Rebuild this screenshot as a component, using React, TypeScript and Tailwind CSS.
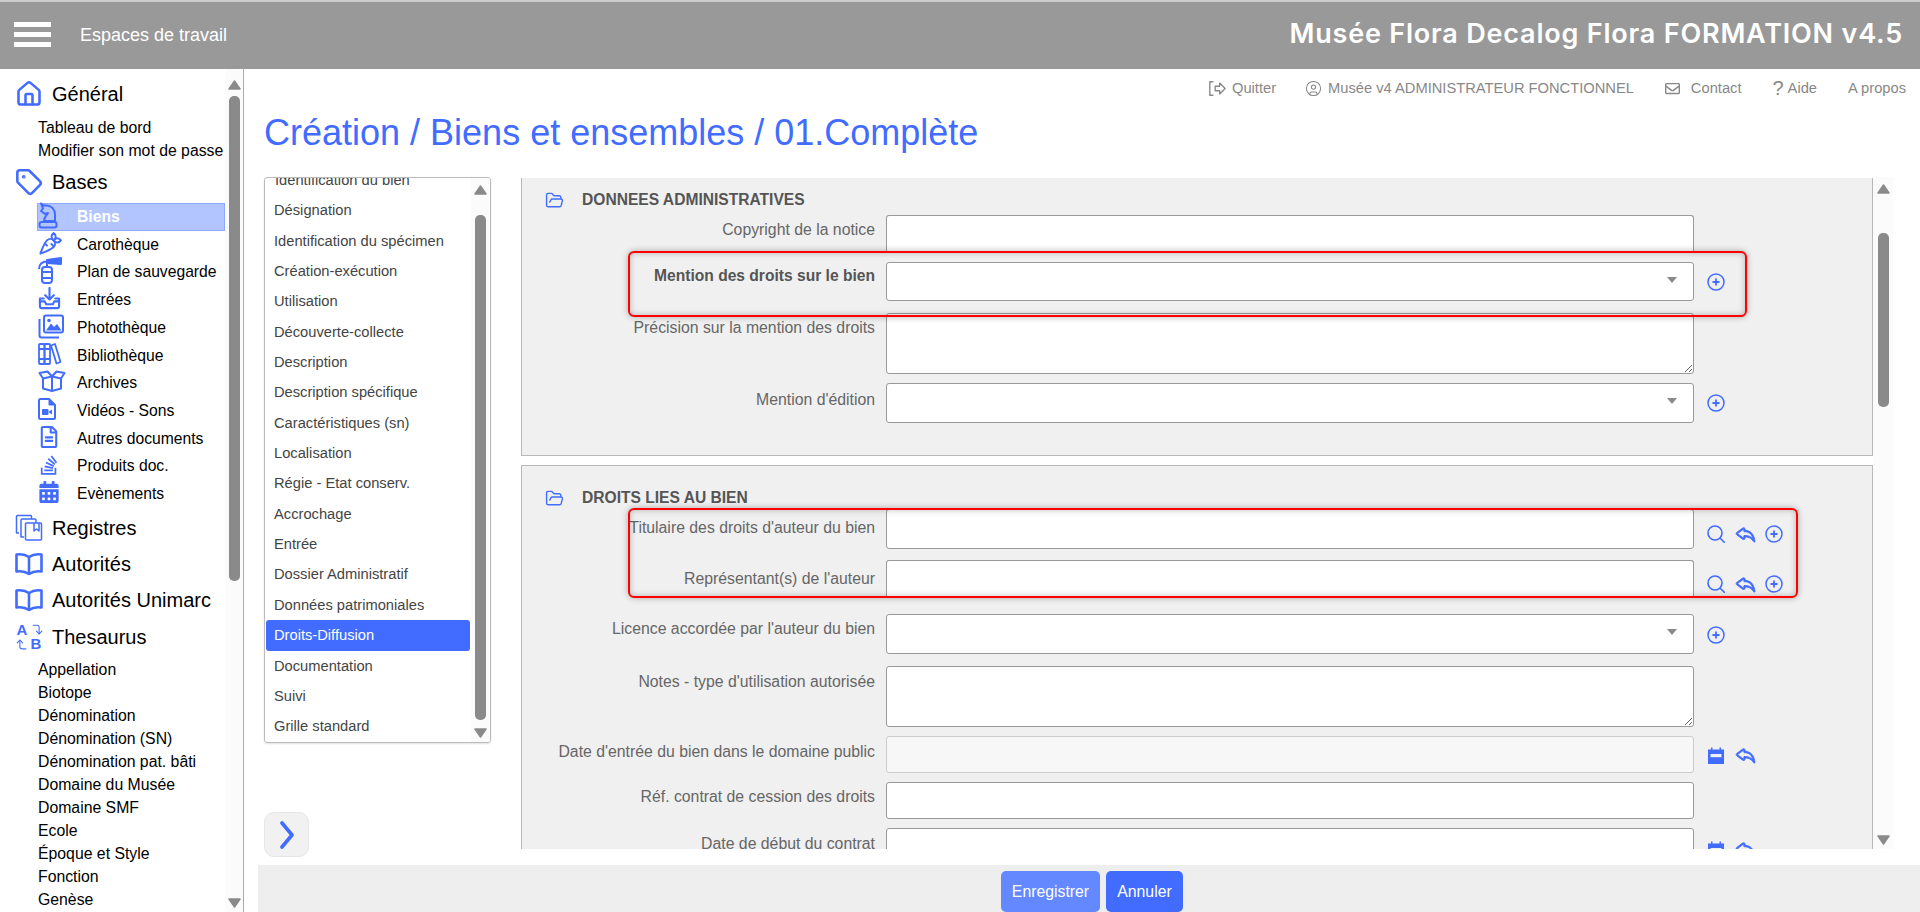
import React from 'react';
import {
  Carrot, CircleUser, CornerLeftUp, CornerRightDown, FolderOpen, House, Tag,
} from 'lucide-react';
import { BsReply } from 'react-icons/bs';
import { FaCalendarAlt, FaRegEnvelope, FaRegFileAlt, FaStackOverflow } from 'react-icons/fa';

const BLUE = '#416cff';

const ArrowUp = ({ className = '' }: { className?: string }) => (
  <svg width="13" height="10" viewBox="0 0 13 10" className={className}>
    <polygon points="6.5,1 12,9 1,9" fill="#8a8a8a" stroke="#8a8a8a" strokeWidth="1.5" strokeLinejoin="round" />
  </svg>
);

const ArrowDown = ({ className = '' }: { className?: string }) => (
  <svg width="13" height="10" viewBox="0 0 13 10" className={className}>
    <polygon points="1,1 12,1 6.5,9" fill="#8a8a8a" stroke="#8a8a8a" strokeWidth="1.5" strokeLinejoin="round" />
  </svg>
);

const Caret = () => (
  <svg width="10" height="6" viewBox="0 0 10 6">
    <polygon points="0,0 10,0 5,6" fill="#8a8a8a" />
  </svg>
);

const Knight = () => (
  <svg width="20" height="27" viewBox="0 0 20 27" fill="none" stroke={BLUE} strokeWidth="2" strokeLinejoin="round">
    <path d="M3 1.500l2.500 2h3c5 0 8.500 4 8.500 9v6.500H6c0-4 2-5 4-8l-3 1-4-3 2-2.500z" />
    <rect x="1.500" y="20" width="17" height="5.500" rx="2" />
  </svg>
);

const Extinguisher = () => (
  <svg width="24" height="27" viewBox="0 0 24 27" fill="none" stroke={BLUE} strokeWidth="2" strokeLinejoin="round">
    <rect x="4" y="10" width="10" height="16" rx="3" />
    <path d="M4 15h10M4 21h10" />
    <path d="M1 12C1 7.500 4 4.500 9 4.500" />
    <path d="M9 4.500v5.500" />
    <path d="M9 3l14-2v6L9 6z" fill={BLUE} />
  </svg>
);

const InboxIn = () => (
  <svg width="23" height="23" viewBox="0 0 24 24" fill="none" stroke={BLUE} strokeWidth="2.200" strokeLinecap="round" strokeLinejoin="round">
    <path d="M12 1v12M7.500 8.500 12 13l4.500-4.500" />
    <path d="M6 12H2v8a2 2 0 0 0 2 2h16a2 2 0 0 0 2-2v-8h-4" />
    <path d="M2 15h5l1.500 3h7l1.500-3h5" />
  </svg>
);

const Photos = () => (
  <svg width="26" height="25" viewBox="0 0 26 25" fill="none" stroke={BLUE} strokeWidth="2" strokeLinejoin="round">
    <rect x="6" y="1.500" width="19" height="17" rx="2" />
    <path d="M1.500 5v16.500a2 2 0 0 0 2 2H21" />
    <path d="M8 16.500l5-7 3 3.500 3-3 4.500 6.500z" fill={BLUE} stroke="none" />
    <circle cx="11" cy="6.500" r="1.800" fill={BLUE} stroke="none" />
  </svg>
);

const Books = () => (
  <svg width="24" height="24" viewBox="0 0 24 24" fill="none" stroke={BLUE} strokeWidth="1.800" strokeLinejoin="round">
    <rect x="1" y="2" width="5.500" height="20" rx="1" />
    <rect x="6.500" y="2" width="5.500" height="20" rx="1" />
    <path d="M13 3.500 17 2l5.500 18-4 1.500z" />
    <path d="M1 7h11M1 17h11" />
  </svg>
);

const BoxOpen = () => (
  <svg width="28" height="22" viewBox="0 0 28 22" fill="none" stroke={BLUE} strokeWidth="2" strokeLinejoin="round">
    <path d="M14 6.500 9.500 1.500 1.500 3l3.500 5.500z" />
    <path d="M14 6.500l4.500-5 8 1.500L23 8.500z" />
    <path d="M5 9v9.500l9 2.500 9-2.500V9" />
    <path d="M14 6.500V21" />
  </svg>
);

const FileVideo = () => (
  <svg width="18" height="22" viewBox="0 0 18 22" fill="none">
    <path d="M2.500 1H11l6 6v12.500a1.500 1.500 0 0 1-1.500 1.500h-13A1.500 1.500 0 0 1 1 19.500v-17A1.500 1.500 0 0 1 2.500 1z" stroke={BLUE} strokeWidth="2" />
    <path d="M11 1v6h6" fill={BLUE} stroke={BLUE} strokeWidth="1" />
    <rect x="4" y="11" width="6.500" height="6" rx="1" fill={BLUE} />
    <path d="M11 13.500 14 11.500v5l-3-2z" fill={BLUE} />
  </svg>
);

const Albums = () => (
  <svg width="28" height="27" viewBox="0 0 28 27" fill="none" stroke={BLUE} strokeWidth="1.500" strokeLinejoin="round">
    <path d="M4 19H1.500V2.500a1 1 0 0 1 1-1h13a1 1 0 0 1 1 1V5" />
    <path d="M9 23H6V6a1 1 0 0 1 1-1h13a1 1 0 0 1 1 1v3" />
    <rect x="10.500" y="9" width="16" height="17" rx="1" />
    <path d="M19 9v8l2.500-2 2.500 2V9" />
  </svg>
);

const BookWide = () => (
  <svg width="28" height="24" viewBox="0 0 28 24" fill="none" stroke={BLUE} strokeWidth="2.600" strokeLinejoin="round">
    <path d="M14 5C10.500 2.500 6 1.800 1.500 2.500v17c4.500-.7 9 0 12.500 2.500 3.500-2.500 8-3.200 12.500-2.500v-17C22 1.800 17.500 2.500 14 5z" />
    <path d="M14 5v17" />
  </svg>
);

const PlusCircle = () => (
  <svg width="18" height="18" viewBox="0 0 18 18" fill="none" stroke={BLUE} className="shrink-0">
    <circle cx="9" cy="9" r="8" strokeWidth="1.500" />
    <path d="M9 5.500v7M5.500 9h7" strokeWidth="1.800" />
  </svg>
);

const SearchIcon = () => (
  <svg width="18" height="18" viewBox="0 0 18 18" fill="none" stroke={BLUE} strokeWidth="1.600" strokeLinecap="round" className="shrink-0">
    <circle cx="8" cy="8" r="7" />
    <path d="M13.200 13.200 17.300 17.300" />
  </svg>
);

const CalendarBand = () => (
  <svg width="18" height="18" viewBox="0 0 16 18" className="shrink-0">
    <path d="M0 3.500h3V1.500h1.500v2h7v-2H13v2h3V18H0z" fill={BLUE} />
    <rect x="2.500" y="8" width="11" height="3.200" fill="#f0f0f0" />
  </svg>
);

const ExitIcon = () => (
  <svg width="18" height="17" viewBox="0 0 20 18" fill="none" stroke="#888" strokeWidth="1.500" strokeLinejoin="round">
    <path d="M6 1.500H2v15h4" />
    <path d="M8 6.500h5V3l6 6-6 6v-3.500H8z" />
  </svg>
);

const Reply = () => <BsReply size={23} color={BLUE} className="shrink-0 -mx-[1px]" strokeWidth={0.6} />;

const ThesaurusIcon = () => (
  <div className="grid grid-cols-2 w-[28px] h-[28px] text-[#416cff] font-black text-[15px] leading-[14px] text-center">
    <span>A</span>
    <CornerRightDown size={13} strokeWidth={2} className="ml-[2px]" />
    <CornerLeftUp size={13} strokeWidth={2} className="mt-[1px]" />
    <span>B</span>
  </div>
);

const subBases = [
  { label: 'Biens', icon: <Knight />, active: true },
  { label: 'Carothèque', icon: <Carrot size={25} color={BLUE} strokeWidth={1.9} /> },
  { label: 'Plan de sauvegarde', icon: <Extinguisher /> },
  { label: 'Entrées', icon: <InboxIn /> },
  { label: 'Photothèque', icon: <Photos /> },
  { label: 'Bibliothèque', icon: <Books /> },
  { label: 'Archives', icon: <BoxOpen /> },
  { label: 'Vidéos - Sons', icon: <FileVideo /> },
  { label: 'Autres documents', icon: <FaRegFileAlt size={22} color={BLUE} /> },
  { label: 'Produits doc.', icon: <FaStackOverflow size={22} color={BLUE} /> },
  { label: 'Evènements', icon: <FaCalendarAlt size={22} color={BLUE} /> },
];

const thesaurus = [
  'Appellation', 'Biotope', 'Dénomination', 'Dénomination (SN)', 'Dénomination pat. bâti', 'Domaine du Musée',
  'Domaine SMF', 'Ecole', 'Époque et Style', 'Fonction', 'Genèse',
];

const sections = [
  'Désignation', 'Identification du spécimen', 'Création-exécution', 'Utilisation', 'Découverte-collecte', 'Description',
  'Description spécifique', 'Caractéristiques (sn)', 'Localisation', 'Régie - Etat conserv.', 'Accrochage', 'Entrée',
  'Dossier Administratif', 'Données patrimoniales', 'Droits-Diffusion', 'Documentation', 'Suivi', 'Grille standard',
];

const GroupTitle = ({ icon, label, className = '' }: { icon: React.ReactNode; label: string; className?: string }) => (
  <div className={`flex items-center h-[28px] pl-[15px] text-[20px] text-black whitespace-nowrap ${className}`}>
    <div className="w-[37px] shrink-0 flex items-center">{icon}</div>
    {label}
  </div>
);

const SubLink = ({ label }: { label: string }) => (
  <div className="h-[23px] pl-[38px] leading-[23px] text-[15.8px] text-black whitespace-nowrap">{label}</div>
);

const Sidebar = () => (
  <aside className="w-[244px] shrink-0 flex border-r border-[#aaa] overflow-hidden">
    <div className="w-[225px] shrink-0 overflow-hidden pt-[11px]">
      <GroupTitle icon={<House size={28} color={BLUE} strokeWidth={2.2} />} label="Général" />
      <div className="mt-[8px]">
        <SubLink label="Tableau de bord" />
        <SubLink label="Modifier son mot de passe" />
      </div>
      <GroupTitle icon={<Tag size={28} color={BLUE} strokeWidth={2.2} />} label="Bases" className="mt-[6px]" />
      <div className="mt-[7px]">
        {subBases.map((item) => (
          <div key={item.label} className="flex items-center h-[27.7px] pl-[37px] text-[15.7px] whitespace-nowrap">
            <div
              className={
                item.active
                  ? 'flex items-center w-full h-full bg-[#b3c5ff] border border-[#8ea8ff] font-bold text-white'
                  : 'flex items-center w-full h-full border border-transparent text-black'
              }
            >
              <div className="w-[39px] shrink-0 flex items-center -mt-[3px]">{item.icon}</div>
              {item.label}
            </div>
          </div>
        ))}
      </div>
      <GroupTitle icon={<Albums />} label="Registres" className="mt-[6px]" />
      <GroupTitle icon={<BookWide />} label="Autorités" className="mt-[8px]" />
      <GroupTitle icon={<BookWide />} label="Autorités Unimarc" className="mt-[8.5px]" />
      <GroupTitle icon={<ThesaurusIcon />} label="Thesaurus" className="mt-[8.5px]" />
      <div className="mt-[7px]">
        {thesaurus.map((t) => (
          <SubLink key={t} label={t} />
        ))}
      </div>
    </div>
    <div className="flex-1 bg-[#fbfbfb] flex flex-col items-center pt-[11px]">
      <ArrowUp />
      <div className="w-[11px] h-[485px] mt-[6px] rounded-[5px] bg-[#8a8a8a]" />
      <ArrowDown className="mt-[317px]" />
    </div>
  </aside>
);

const TopLinks = () => (
  <div className="h-[38px] flex items-center justify-end pr-[14px] text-[14.7px] text-[#888] whitespace-nowrap">
    <ExitIcon />
    <span className="ml-[6px]">Quitter</span>
    <CircleUser size={17} color="#888" strokeWidth={1.5} className="ml-[29px]" />
    <span className="ml-[6px]">Musée v4 ADMINISTRATEUR FONCTIONNEL</span>
    <FaRegEnvelope size={15} color="#888" className="ml-[31px]" />
    <span className="ml-[11px]">Contact</span>
    <span className="ml-[31px] text-[20px] font-light leading-none">?</span>
    <span className="ml-[4px]">Aide</span>
    <span className="ml-[31px]">A propos</span>
  </div>
);

const SectionList = () => (
  <div className="w-[227px] shrink-0">
    <div className="h-[566px] flex border border-[#bbb] rounded-[3px] shadow-[0_1px_2px_rgba(0,0,0,0.12)] overflow-hidden">
      <div className="flex-1 overflow-hidden px-[1px]">
        <div className="-mt-[13px] h-[30.35px] leading-[30.35px] pl-[9px] text-[14.7px] text-[#444]">Identification du bien</div>
        {sections.map((s) => (
          <div
            key={s}
            className={
              s === 'Droits-Diffusion'
                ? 'h-[30.35px] leading-[30.35px] pl-[8px] text-[14.7px] text-white bg-[#416cff] rounded-[3px]'
                : 'h-[30.35px] leading-[30.35px] pl-[8px] text-[14.7px] text-[#444]'
            }
          >
            {s}
          </div>
        ))}
      </div>
      <div className="w-[19px] shrink-0 bg-[#fbfbfb] flex flex-col items-center pt-[7px]">
        <ArrowUp />
        <div className="w-[11px] h-[505px] mt-[20px] rounded-[5px] bg-[#8a8a8a]" />
        <ArrowDown className="mt-[8px]" />
      </div>
    </div>
    <div className="mt-[69px] w-[45px] h-[45px] rounded-[10px] bg-[#f1f1f1] border border-[#e6e6e6] flex items-center justify-center">
      <svg width="16" height="28" viewBox="0 0 16 28" fill="none" stroke={BLUE} strokeWidth="3.600" strokeLinecap="round" strokeLinejoin="round">
        <path d="M3 2 13 14 3 26" />
      </svg>
    </div>
  </div>
);

const Field = ({
  label, labelClass, className, children, icons, bold,
}: {
  label: string;
  labelClass: string;
  className: string;
  children: React.ReactNode;
  icons?: React.ReactNode;
  bold?: boolean;
}) => (
  <div className={`flex items-start ${className}`}>
    <div
      className={`w-[353px] shrink-0 text-right leading-[18px] whitespace-nowrap ${
        bold ? 'font-bold text-[15.6px] text-[#555]' : 'text-[15.8px] text-[#666]'
      } ${labelClass}`}
    >
      {label}
    </div>
    <div className="ml-[11px] w-[808px] shrink-0">{children}</div>
    {icons}
  </div>
);

const TextInput = ({ className = 'h-[39px]', disabled }: { className?: string; disabled?: boolean }) => (
  <input
    readOnly
    className={`block w-full rounded-[3px] border ${
      disabled ? 'bg-[#f7f7f7] border-[#ccc]' : 'bg-white border-[#999]'
    } ${className}`}
  />
);

const SelectBox = ({ className = 'h-[39px]' }: { className?: string }) => (
  <div className={`flex justify-end pt-[14px] pr-[16px] w-full rounded-[3px] border border-[#999] bg-white ${className}`}>
    <div className="h-[6px] flex">
      <Caret />
    </div>
  </div>
);

const Area = () => (
  <textarea readOnly className="block w-full h-[61px] min-w-[808px] max-w-[808px] rounded-[3px] border border-[#999] bg-white align-top" />
);

const IconRow = ({ className, children }: { className: string; children: React.ReactNode }) => (
  <div className={`ml-[13px] flex items-center gap-[9.5px] ${className}`}>{children}</div>
);

const SectionHead = ({ title }: { title: string }) => (
  <div className="flex items-center h-[20px] pl-[23px]">
    <FolderOpen size={19} color={BLUE} strokeWidth={1.8} />
    <span className="ml-[18px] font-bold text-[15.6px] text-[#555]">{title}</span>
  </div>
);

const RedBox = ({ className }: { className: string }) => (
  <div
    className={`absolute left-[106px] border-2 border-[#f00] rounded-[6px] pointer-events-none shadow-[0_0_6px_rgba(0,0,0,0.3),inset_0_0_6px_rgba(0,0,0,0.25)] ${className}`}
  />
);

const FormPanels = () => (
  <div className="w-[1352px] shrink-0 h-[671px] overflow-hidden mt-[1px]">
    <div className="relative h-[278px] bg-[#f0f0f0] border-x border-b border-[#b8b8b8] pt-[12px]">
      <SectionHead title="DONNEES ADMINISTRATIVES" />
      <Field label="Copyright de la notice" labelClass="pt-[6px]" className="mt-[5px]">
        <TextInput className="h-[36px] border-b-0 rounded-b-none" />
      </Field>
      <Field
        label="Mention des droits sur le bien"
        labelClass="pt-[5px]"
        className="mt-[11px]"
        bold
        icons={<IconRow className="pt-[11px]"><PlusCircle /></IconRow>}
      >
        <SelectBox />
      </Field>
      <Field label="Précision sur la mention des droits" labelClass="pt-[6px]" className="mt-[12px]">
        <Area />
      </Field>
      <Field label="Mention d'édition" labelClass="pt-[8px]" className="mt-[9px]" icons={<IconRow className="pt-[11px]"><PlusCircle /></IconRow>}>
        <SelectBox className="h-[40px]" />
      </Field>
      <RedBox className="top-[73px] w-[1119px] h-[66px]" />
    </div>

    <div className="relative mt-[9px] bg-[#f0f0f0] border border-b-0 border-[#b8b8b8] pt-[22px] pb-[20px]">
      <SectionHead title="DROITS LIES AU BIEN" />
      <Field
        label="Titulaire des droits d'auteur du bien"
        labelClass="pt-[10px]"
        className="mt-[1px]"
        icons={<IconRow className="pt-[13px]"><SearchIcon /><Reply /><PlusCircle /></IconRow>}
      >
        <TextInput className="h-[40px]" />
      </Field>
      <Field
        label="Représentant(s) de l'auteur"
        labelClass="pt-[10px]"
        className="mt-[11px]"
        icons={<IconRow className="pt-[12px]"><SearchIcon /><Reply /><PlusCircle /></IconRow>}
      >
        <TextInput className="h-[38px] border-b-0 rounded-b-none" />
      </Field>
      <Field
        label="Licence accordée par l'auteur du bien"
        labelClass="pt-[6px]"
        className="mt-[16px]"
        icons={<IconRow className="pt-[12px]"><PlusCircle /></IconRow>}
      >
        <SelectBox className="h-[40px]" />
      </Field>
      <Field label="Notes - type d'utilisation autorisée" labelClass="pt-[7px]" className="mt-[12px]">
        <Area />
      </Field>
      <Field
        label="Date d'entrée du bien dans le domaine public"
        labelClass="pt-[7px]"
        className="mt-[9px]"
        icons={<IconRow className="pt-[7px]"><CalendarBand /><Reply /></IconRow>}
      >
        <TextInput disabled className="h-[37px]" />
      </Field>
      <Field label="Réf. contrat de cession des droits" labelClass="pt-[6px]" className="mt-[9px]">
        <TextInput className="h-[37px]" />
      </Field>
      <Field
        label="Date de début du contrat"
        labelClass="pt-[7px]"
        className="mt-[9px]"
        icons={<IconRow className="pt-[9px]"><CalendarBand /><Reply /></IconRow>}
      >
        <TextInput className="h-[40px]" />
      </Field>
      <RedBox className="top-[42px] w-[1170px] h-[90px]" />
    </div>
  </div>
);

const App: React.FC = () => {
  return (
    <div className="w-[1920px] h-[912px] flex flex-col overflow-hidden bg-white font-['Liberation_Sans',Arial,sans-serif]">
      {/* Header */}
      <header className="h-[69px] shrink-0 flex items-center bg-[#999] border-t-2 border-[#ccc] text-white">
        <div className="ml-[14px] w-[37px] flex flex-col gap-[5px] -mt-[2px]">
          <div className="h-[5px] bg-white" />
          <div className="h-[5px] bg-white" />
          <div className="h-[5px] bg-white" />
        </div>
        <span className="ml-[29px] text-[18px]">Espaces de travail</span>
        <span className="ml-auto mr-[17px] -mt-[3px] font-['Inter',sans-serif] font-semibold text-[27px] tracking-[0.8px] whitespace-nowrap">
          Musée Flora Decalog Flora FORMATION v4.5
        </span>
      </header>

      <div className="flex-1 flex min-h-0">
        <Sidebar />
        <main className="flex-1 min-w-0 flex flex-col">
          <TopLinks />
          <h1 className="pl-[20px] h-[70px] leading-[52px] text-[36px] text-[#416cff]">
            Création / Biens et ensembles / 01.Complète
          </h1>
          {/* Content */}
          <div className="flex pl-[20px] h-[688px]">
            <SectionList />
            <div className="ml-[30px] flex">
              <FormPanels />
              <div className="w-[20px] h-[672px] bg-[#fbfbfb] flex flex-col items-center pt-[7px]">
                <ArrowUp />
                <div className="w-[11px] h-[174px] mt-[39px] rounded-[5px] bg-[#8a8a8a]" />
                <ArrowDown className="mt-[428px]" />
              </div>
            </div>
          </div>
          {/* Bottom actions */}
          <div className="ml-[14px] flex-1 bg-[#eee] flex justify-center items-start pt-[6px] pl-[6px] text-[15.8px] text-white">
            <button className="w-[99px] h-[41px] rounded-[5px] bg-[#6488ff]">Enregistrer</button>
            <button className="ml-[6px] w-[77px] h-[41px] rounded-[5px] bg-[#416cff]">Annuler</button>
          </div>
        </main>
      </div>
    </div>
  );
};

export default App;
